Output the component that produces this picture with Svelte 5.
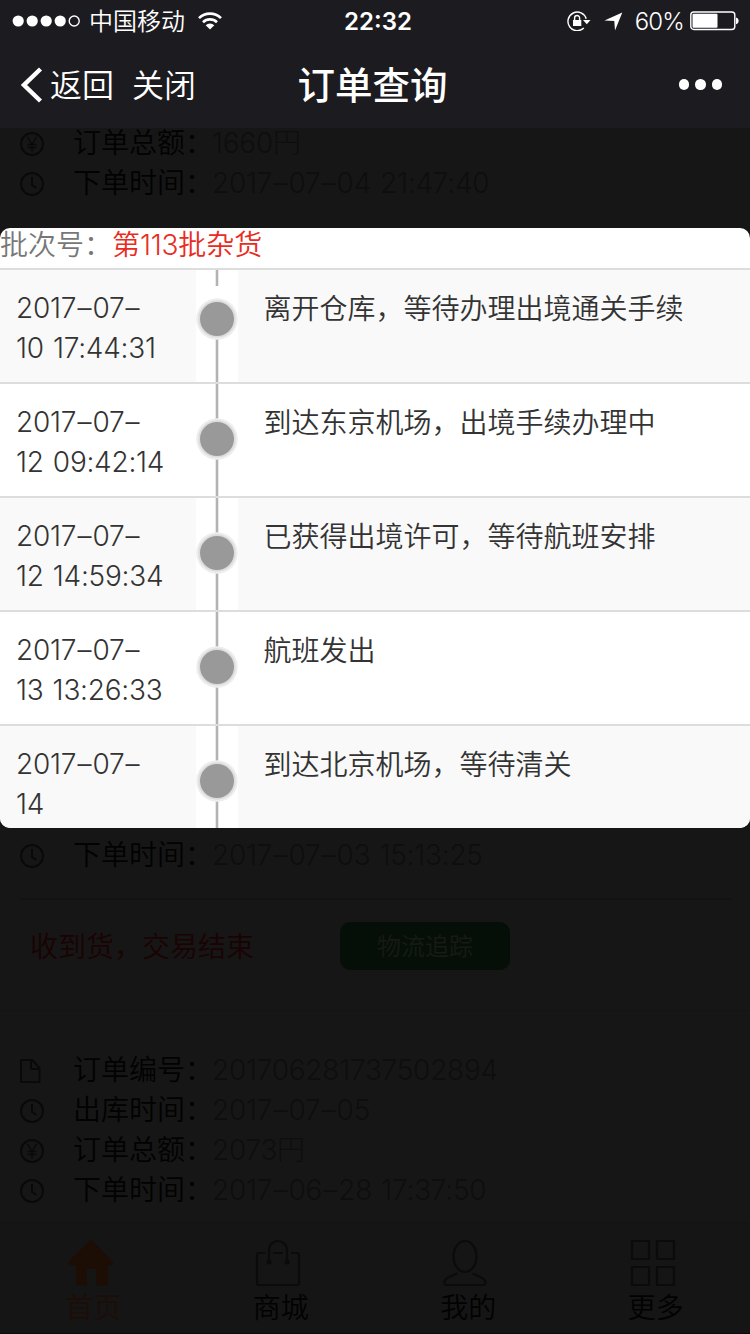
<script lang="ts">
  type Field = { icon: string; label: string; value: string }

  const firstOrder: Field[] = [
    { icon: 'yen', label: '订单总额：', value: '1660円' },
    { icon: 'clock', label: '下单时间：', value: '2017–07–04 21:47:40' },
  ]

  const secondOrder: Field[] = [
    { icon: 'clock', label: '下单时间：', value: '2017–07–03 15:13:25' },
  ]

  const thirdOrder: Field[] = [
    { icon: 'file', label: '订单编号：', value: '201706281737502894' },
    { icon: 'clock', label: '出库时间：', value: '2017–07–05' },
    { icon: 'yen', label: '订单总额：', value: '2073円' },
    { icon: 'clock', label: '下单时间：', value: '2017–06–28 17:37:50' },
  ]

  const steps = [
    { day: '2017–07–', time: '10 17:44:31', text: '离开仓库，等待办理出境通关手续' },
    { day: '2017–07–', time: '12 09:42:14', text: '到达东京机场，出境手续办理中' },
    { day: '2017–07–', time: '12 14:59:34', text: '已获得出境许可，等待航班安排' },
    { day: '2017–07–', time: '13 13:26:33', text: '航班发出' },
    { day: '2017–07–', time: '14', text: '到达北京机场，等待清关' },
  ]

  const tabs = [
    { icon: 'home', label: '首页' },
    { icon: 'bag', label: '商城' },
    { icon: 'user', label: '我的' },
    { icon: 'grid', label: '更多' },
  ]
</script>

<!-- dashes get a little air on both sides -->
{#snippet num(value: string)}
  {#each value.split('–') as part, i}{#if i > 0}<span class="dash">–</span>{/if}{part}{/each}
{/snippet}

{#snippet fieldRow(field: Field)}
  <div class="field">
    <svg class="field-icon" viewBox="0 0 24 24">
      {#if field.icon === 'file'}
        <path d="M2 1H12l7.500 8v13.500a.8.800 0 0 1-.8.800H2a1 1 0 0 1-1-1V2a1 1 0 0 1 1-1ZM11 1v8q0 1 1 1h7.500" />
      {:else if field.icon === 'yen'}
        <circle cx="12" cy="12" r="11" />
        <path class="thin" d="m7.500 5 4.500 7.500 4.500-7.500M12 12.500V19.500M7.500 12.500h9M7.500 15.500h9" />
      {:else}
        <circle cx="12" cy="12" r="11" />
        <path d="M12 5v8l4.500 3" />
      {/if}
    </svg>
    <span class="field-label">{field.label}</span>
    <span class="field-value num">{@render num(field.value)}</span>
  </div>
{/snippet}

<div class="screen">
  <header>
    <div class="status-bar">
      <div class="carrier">
        <svg width="68" height="12" viewBox="0 0 68 12">
          <circle cx="6.200" cy="6" r="5.600" />
          <circle cx="20.200" cy="6" r="5.600" />
          <circle cx="34.200" cy="6" r="5.600" />
          <circle cx="48.200" cy="6" r="5.600" />
          <circle class="hollow" cx="62.200" cy="6" r="5" />
        </svg>
        <span>中国移动</span>
        <svg class="wifi" width="24" height="18" viewBox="0 0 24 18">
          <path class="arc" d="M1 6.200a15.500 15.500 0 0 1 22 0M5 10.200a10 10 0 0 1 14 0" />
          <path d="M7.700 13.200a6.200 6.200 0 0 1 8.600 0L12 17.600Z" />
        </svg>
      </div>
      <div class="clock">22:32</div>
      <div class="indicators">
        <svg width="24" height="20" viewBox="0 0 24 20">
          <path class="hollow" d="M19.200 7.800A9.300 9.300 0 1 0 16.800 17" />
          <path d="M16 9h7.500l-3.700 4.200ZM6 9h8.300v6H6Z" />
          <path class="hollow" d="M7.600 9V7a2.500 2.500 0 0 1 5 0v2" />
        </svg>
        <svg class="arrow" width="19" height="19" viewBox="0 0 19 19">
          <path d="M18.300.5 11 18.500l-.7-9.600L.500 8.400Z" />
        </svg>
        <span class="percent">60%</span>
        <svg width="50" height="20" viewBox="0 0 50 20">
          <rect class="hollow" x=".8" y="1" width="44" height="17.500" rx="3" />
          <rect x="2.500" y="2.800" width="25" height="14" rx="1" />
          <path d="M46 6.500c3.500.8 3.500 6 0 6.800Z" />
        </svg>
      </div>
    </div>
    <nav>
      <div class="nav-left">
        <svg width="22" height="36" viewBox="0 0 22 36">
          <path class="chevron" d="M19.500 2 3 18l16.500 16" />
        </svg>
        <span>返回</span>
        <span class="close">关闭</span>
      </div>
      <h1>订单查询</h1>
      <div class="more"><i></i><i></i><i></i></div>
    </nav>
  </header>

  <main>
    <section class="order order-first">
      {#each firstOrder as field}{@render fieldRow(field)}{/each}
    </section>
    <section class="order order-second">
      {#each secondOrder as field}{@render fieldRow(field)}{/each}
      <div class="order-foot">
        <span class="order-state">收到货，交易结束</span>
        <button type="button">物流追踪</button>
      </div>
    </section>
    <section class="order order-third">
      {#each thirdOrder as field}{@render fieldRow(field)}{/each}
    </section>

    <div class="dialog">
      <div class="dialog-head">
        <span>批次号：</span><span class="batch">第<span class="batch-num">113</span>批杂货</span>
      </div>
      {#each steps as step, i}
        <div class="step">
          <div class="when num">{@render num(step.day)}<br />{step.time}</div>
          <svg class="rail" width="42" height="112" viewBox="0 0 42 112">
            {#if i === 0}
              <path d="M21 0v16M21 69v43" />
              <circle class="halo" cx="21" cy="49" r="20.800" />
              <circle class="ring" cx="21" cy="49" r="18.800" />
              <circle class="dot" cx="21" cy="49" r="17" />
            {:else}
              <path d="M21 0v112" />
              <circle class="halo" cx="21" cy="55" r="20.800" />
              <circle class="ring" cx="21" cy="55" r="18.800" />
              <circle class="dot" cx="21" cy="55" r="17" />
            {/if}
          </svg>
          <div class="what">{step.text}</div>
        </div>
      {/each}
    </div>
  </main>

  <footer>
    {#each tabs as tab, i}
      <div class="tab" class:active={i === 0}>
        <svg width="46" height="48" viewBox="0 0 46 48">
          {#if tab.icon === 'home'}
            <path class="solid" d="M20.500 2.800q2.500-2.500 5 0L44.500 22.500q1.500 4-2.500 4H40v17q0 3-3 3h-9V30h-9v16.500h-8q-3 0-3-3v-17H3.500Q0 26 1 22.500Z" />
          {:else if tab.icon === 'bag'}
            <path d="M10 14H4a2 2 0 0 0-2 2v28a2 2 0 0 0 2 2h38a2 2 0 0 0 2-2V16a2 2 0 0 0-2-2h-6M18 14h10M14 22V11a9 9 0 0 1 18 0v11" />
            <circle class="solid" cx="14" cy="23" r="2.500" />
            <circle class="solid" cx="32" cy="23" r="2.500" />
          {:else if tab.icon === 'user'}
            <ellipse cx="22" cy="17.500" rx="11.500" ry="15.500" />
            <path d="M14.500 34.500 5 38.500q-4 2.500-3.500 6 .5 1.500 2 1.500h37q2 0 2-2.500 0-3-4-5l-9-4" />
          {:else}
            <path d="M2 2h17v18H2ZM27 2h17v18H27ZM2 28h17v18H2ZM27 28h17v18H27Z" />
          {/if}
        </svg>
        <span>{tab.label}</span>
      </div>
    {/each}
  </footer>
</div>

<style>
  :global(body) {
    margin: 0;
    background: #161616;
  }

  .screen {
    display: flex;
    flex-direction: column;
    width: 750px;
    height: 1334px;
    overflow: hidden;
    background: #161616;
    color: #020202;
    font-family: Inter, 'Noto Sans CJK SC', sans-serif;
    font-size: 28px;
    font-weight: 350;
    line-height: 40px;
  }

  svg {
    display: block;
    flex: none;
  }

  header {
    flex: none;
    height: 128px;
    background: #1c1b20;
    color: #fff;
  }

  header svg {
    fill: #fff;
  }

  header .hollow {
    fill: none;
    stroke: #fff;
    stroke-width: 1.4;
  }

  .status-bar,
  nav {
    display: grid;
    grid-template-columns: 1fr auto 1fr;
    align-items: center;
  }

  .status-bar {
    height: 41px;
    padding: 0 10px 0 12px;
    font-size: 24px;
  }

  .carrier,
  .indicators,
  .nav-left,
  .more {
    display: flex;
    align-items: center;
  }

  .carrier span {
    margin-left: 9px;
    padding-top: 2px;
  }

  .wifi {
    margin-left: 13px;
  }

  .arc {
    fill: none;
    stroke: #fff;
    stroke-width: 2.6;
  }

  .clock {
    padding: 1px 0 0 4px;
    font-weight: 600;
  }

  .indicators {
    justify-content: flex-end;
  }

  .arrow {
    margin-left: 13px;
  }

  .percent {
    margin: 0 6px 0 12px;
    padding-top: 1px;
    font-weight: 300;
    letter-spacing: -0.8px;
  }

  nav {
    height: 87px;
    padding: 0 28px 0 21px;
    font-size: 31px;
  }

  .chevron {
    fill: none;
    stroke: #fff;
    stroke-width: 4.4;
  }

  .nav-left span {
    margin-left: 7px;
    padding-top: 2px;
    font-size: 32px;
  }

  .nav-left .close {
    margin-left: 18px;
  }

  h1 {
    margin: 0;
    padding: 3px 0 0 2px;
    font-size: 37.5px;
    font-weight: 500;
  }

  .more {
    justify-content: flex-end;
    gap: 6px;
  }

  .more i {
    width: 10.500px;
    height: 10.500px;
    border-radius: 50%;
    background: #fff;
  }

  main {
    position: relative;
    display: flex;
    flex: none;
    flex-direction: column;
    height: 1094px;
  }

  .order {
    flex: none;
    box-sizing: border-box;
  }

  .order-first {
    height: 712px;
    margin-top: -6px;
  }

  .order-second {
    height: 177px;
    border-bottom: 1px solid #141414;
  }

  .order-third {
    padding-top: 38px;
  }

  .field {
    display: flex;
    align-items: center;
    height: 40px;
    padding-left: 20px;
    line-height: 28px;
    white-space: nowrap;
  }

  .field-icon {
    width: 24px;
    height: 24px;
    margin: 4px 29px 0 0;
    fill: none;
    stroke: #090909;
    stroke-width: 1.9;
  }

  .thin {
    stroke-width: 1.3;
  }

  .field-label,
  .field-value {
    padding-top: 2px;
  }

  .field-label {
    width: 139px;
  }

  .field-value {
    color: #0e0e0e;
  }

  .num {
    font-weight: 300;
    letter-spacing: -0.25px;
    white-space: nowrap;
    word-spacing: 1.5px;
  }

  .dash {
    margin: 0 1.25px;
  }

  .order-foot {
    display: flex;
    align-items: center;
    height: 92px;
    margin: 24px 19px 0;
    padding-left: 11px;
    border-top: 2px solid #131313;
  }

  .order-state {
    width: 310px;
    padding-top: 2px;
    color: #1a0303;
  }

  button {
    width: 170px;
    height: 48px;
    border: 0;
    border-radius: 10px;
    background: #060f07;
    color: #171a17;
    font: inherit;
    font-size: 24px;
    line-height: 40px;
    padding: 2px 0 0;
  }

  .dialog {
    position: absolute;
    top: 100px;
    left: 0;
    width: 750px;
    height: 600px;
    overflow: hidden;
    border-radius: 10px;
    background: #fff;
    color: #333;
  }

  .dialog-head {
    height: 40px;
    color: #777;
    line-height: 35px;
  }

  .batch {
    color: #e92c21;
  }

  .batch-num {
    letter-spacing: -0.3px;
  }

  .step {
    display: flex;
    height: 112px;
    border-top: 2px solid #ddd;
  }

  .step:nth-child(even) {
    background: #f9f9f9;
  }

  .when {
    width: 180px;
    padding: 17.5px 0 0 16px;
  }

  .rail {
    background: #fff;
  }

  .rail path {
    stroke: #b3b3b3;
    stroke-width: 2.600;
  }

  .halo {
    fill: #eee;
  }

  .ring {
    fill: #dcdcdc;
  }

  .dot {
    fill: #999;
  }

  .what {
    padding: 19px 0 0 25.5px;
  }

  footer {
    display: flex;
    flex: none;
    box-sizing: border-box;
    height: 112px;
    border-top: 1px solid #131313;
    border-bottom: 1px solid #0d090d;
    background: #151515;
  }

  .tab {
    display: flex;
    flex: 1;
    flex-direction: column;
    align-items: center;
    padding-top: 16px;
  }

  .tab svg {
    margin-right: 6px;
    fill: none;
    stroke: #0b0b0b;
    stroke-width: 2.200;
  }

  .tab span {
    margin-right: 1px;
    line-height: 42px;
  }

  .tab .solid {
    fill: #0b0b0b;
    stroke: none;
  }

  .active {
    color: #1c0e07;
  }

  .active .solid {
    fill: #1c0d05;
  }
</style>
